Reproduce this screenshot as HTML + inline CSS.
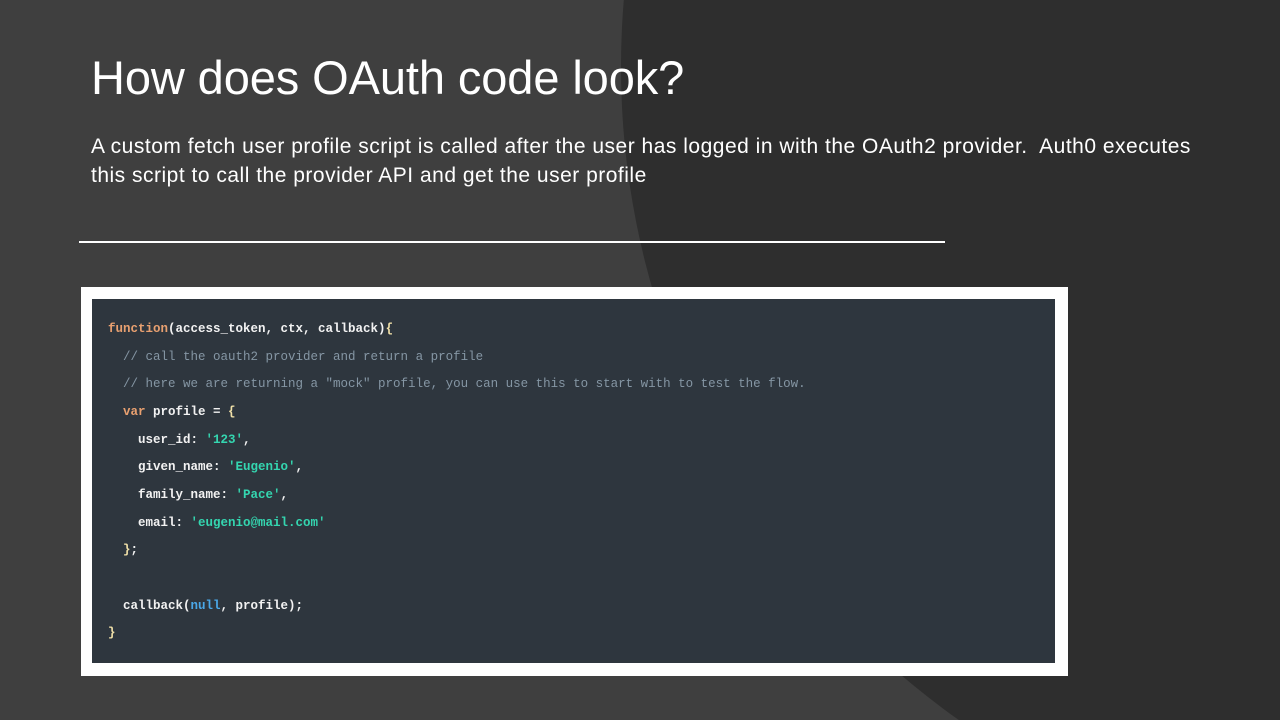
<!DOCTYPE html>
<html><head><meta charset="utf-8"><style>
*{margin:0;padding:0}
html{width:1280px;height:720px;overflow:hidden}
body{width:1280px;height:720px;overflow:hidden;background:#3f3f3f;position:relative;font-family:"Liberation Sans",sans-serif;color:#fff}
svg.bg{position:absolute;left:0;top:0;display:block}
h1{position:absolute;left:91px;top:50px;font-weight:normal;font-size:47px;letter-spacing:-0.1px;white-space:nowrap}
p.body{position:absolute;left:91px;top:132px;font-size:21px;line-height:29px;white-space:nowrap;letter-spacing:0.5px}
.rule{position:absolute;left:79px;top:241px;width:866px;height:2px;background:#fff}
.box{position:absolute;left:81px;top:287px;width:987px;height:389px;background:#fff}
.code{position:absolute;left:92px;top:299px;width:963px;height:364px;background:#2e363e}
pre{position:absolute;left:108px;top:316px;font-family:"Liberation Mono",monospace;font-size:12.5px;line-height:27.65px;color:#f2f2f2;font-weight:bold;white-space:pre}
.k{color:#e8a070}.c{color:#8596a4;font-weight:normal}.s{color:#34d6b0}.n{color:#4aa8e8}.b{color:#f0e0a8}
</style></head><body>
<svg class="bg" width="1280" height="720"><circle cx="1421" cy="67" r="800" fill="#2e2e2e"/></svg>
<h1>How does OAuth code look?</h1>
<p class="body">A custom fetch user profile script is called after the user has logged in with the OAuth2 provider.&nbsp; Auth0 executes<br>this script to call the provider API and get the user profile</p>
<div class="rule"></div>
<div class="box"></div>
<div class="code"></div>
<pre><span class="k">function</span>(access_token, ctx, callback)<span class="b">{</span>
  <span class="c">// call the oauth2 provider and return a profile</span>
  <span class="c">// here we are returning a "mock" profile, you can use this to start with to test the flow.</span>
  <span class="k">var</span> profile = <span class="b">{</span>
    user_id: <span class="s">'123'</span>,
    given_name: <span class="s">'Eugenio'</span>,
    family_name: <span class="s">'Pace'</span>,
    email: <span class="s">'eugenio@mail.com'</span>
  <span class="b">}</span>;

  callback(<span class="n">null</span>, profile);
<span class="b">}</span></pre>
</body></html>
